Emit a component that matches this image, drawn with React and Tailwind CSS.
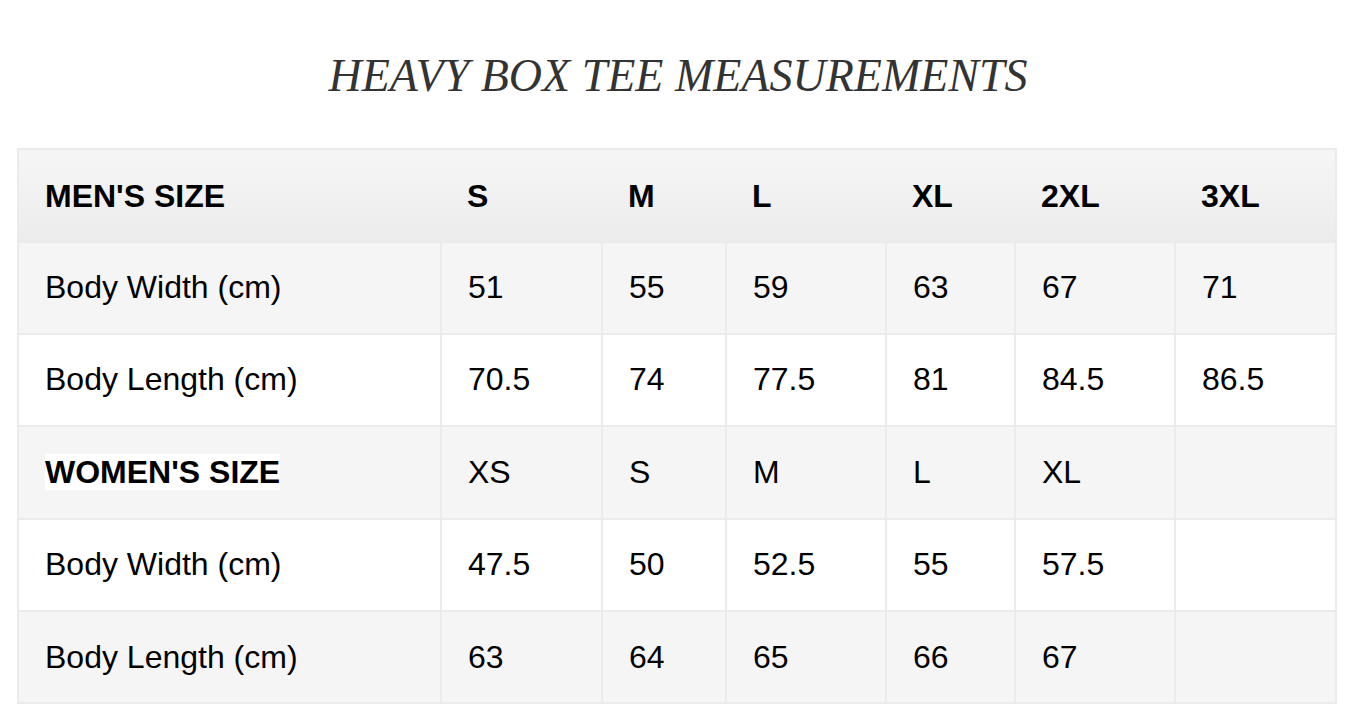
import React from 'react';

const colWidths = ['w-[423px]', 'w-[161px]', 'w-[124px]', 'w-[160px]', 'w-[129px]', 'w-[160px]', 'w-[161px]'];

const rows = [
  { label: 'Body Width (cm)', values: ['51', '55', '59', '63', '67', '71'], bg: 'bg-[#f5f5f5]' },
  { label: 'Body Length (cm)', values: ['70.5', '74', '77.5', '81', '84.5', '86.5'], bg: 'bg-white' },
  { label: "WOMEN'S SIZE", values: ['XS', 'S', 'M', 'L', 'XL', ''], bg: 'bg-[#f5f5f5]', heading: true },
  { label: 'Body Width (cm)', values: ['47.5', '50', '52.5', '55', '57.5', ''], bg: 'bg-white' },
  { label: 'Body Length (cm)', values: ['63', '64', '65', '66', '67', ''], bg: 'bg-[#f5f5f5]' },
];

const headers = ["MEN'S SIZE", 'S', 'M', 'L', 'XL', '2XL', '3XL'];

const cell = 'h-[92.4px] border-2 border-[#ebebeb] pl-[26px] pr-2 text-left align-middle';

export default function App() {
  return (
    <div className="min-h-screen bg-white font-['Liberation_Sans',Arial,sans-serif] text-black">
      <h1 className="pt-[49px] pr-[6px] text-center font-['Liberation_Serif','Times_New_Roman',serif] text-[46px] font-normal italic leading-[53px] text-[#333]">
        HEAVY BOX TEE MEASUREMENTS
      </h1>

      <div className="mt-[46px] px-[17px]">
        <table className="w-[1320px] table-fixed border-collapse text-[32px] leading-[37px]">
          <colgroup>
            {colWidths.map((w, i) => (
              <col key={i} className={w} />
            ))}
          </colgroup>
          <thead>
            <tr className="bg-gradient-to-b from-[#f6f6f6] to-[#ececec]">
              {headers.map((h, i) => (
                <th
                  key={i}
                  className={`${cell} border-x-0 border-t-2 border-b-[3px] border-[#e2e2e2] pt-[4px] font-bold ${i === 0 ? 'border-l-2' : ''} ${i === headers.length - 1 ? 'border-r-2' : ''}`}
                >
                  {h}
                </th>
              ))}
            </tr>
          </thead>
          <tbody>
            {rows.map((row, r) => (
              <tr key={r} className={row.bg}>
                <td className={cell}>
                  {row.heading ? (
                    <span className="bg-white font-bold">{row.label}</span>
                  ) : (
                    row.label
                  )}
                </td>
                {row.values.map((v, i) => (
                  <td key={i} className={cell}>
                    {v}
                  </td>
                ))}
              </tr>
            ))}
          </tbody>
        </table>
      </div>
    </div>
  );
}
